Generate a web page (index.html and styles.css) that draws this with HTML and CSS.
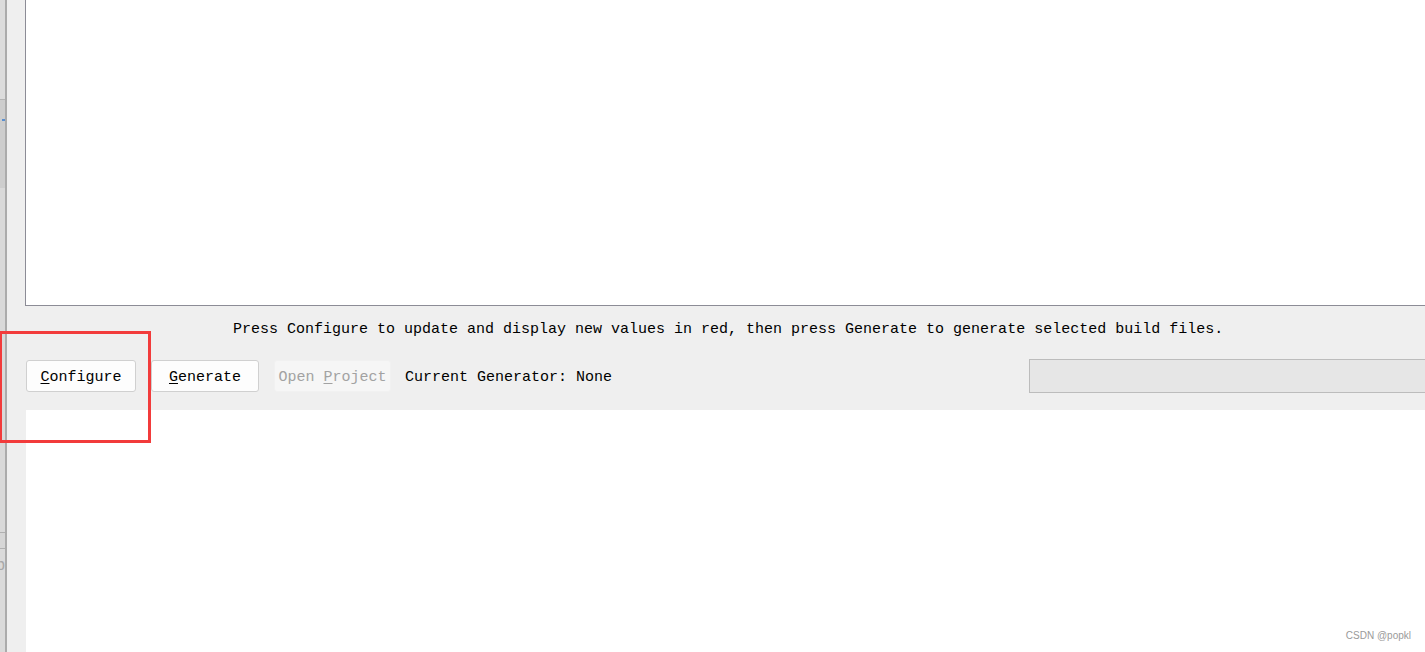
FILE: index.html
```html
<!DOCTYPE html>
<html>
<head>
<meta charset="utf-8">
<link rel="stylesheet" href="styles.css">
</head>
<body>
<div class="app">
  <div class="side">
    <div class="side-fill">
      <div class="seg seg-a"></div>
      <div class="seg seg-b"><span class="dot"></span></div>
      <div class="seg seg-c"></div>
      <div class="seg seg-d"></div>
      <div class="seg seg-e"><span class="glyph">b</span></div>
    </div>
    <div class="side-line"></div>
  </div>
  <div class="main">
    <div class="top-panel"></div>
    <div class="message">Press Configure to update and display new values in red, then press Generate to generate selected build files.</div>
    <div class="toolbar">
      <button class="btn btn-configure"><u>C</u>onfigure</button>
      <button class="btn btn-generate"><u>G</u>enerate</button>
      <button class="btn btn-disabled">Open <u>P</u>roject</button>
      <span class="generator">Current Generator: None</span>
      <div class="progress"></div>
    </div>
    <div class="bottom-panel"></div>
  </div>
</div>
<div class="highlight"></div>
<div class="watermark">CSDN @popkl</div>
</body>
</html>
```
FILE: styles.css
```css
html, body {
  margin: 0;
  padding: 0;
  height: 100%;
  overflow: hidden;
}
body {
  background: #efefef;
  font-family: "Liberation Mono", "DejaVu Sans Mono", monospace;
  font-size: 15px;
  color: #000;
  position: relative;
}
.app {
  display: flex;
  height: 652px;
}
.side {
  width: 7px;
  display: flex;
  flex-shrink: 0;
}
.side-fill {
  width: 5px;
  display: flex;
  flex-direction: column;
  background: #dadada;
}
.side-line {
  width: 2px;
  background: #ababab;
}
.seg { position: relative; overflow: hidden; }
.seg-a { height: 99px; background: #dcdcdc; border-bottom: 1px solid #b4b4b4; }
.seg-b { height: 88px; background: #cdcdcd; }
.seg-c { height: 344px; background: #d9d9d9; border-bottom: 1px solid #b0b0b0; }
.seg-d { height: 15px; background: #d6d6d6; border-bottom: 1px solid #b0b0b0; }
.seg-e { flex: 1; background: #dadada; }
.dot {
  position: absolute;
  left: 2px;
  top: 19px;
  width: 3px;
  height: 2px;
  background: #5a8fd0;
}
.glyph {
  position: absolute;
  left: -4px;
  top: 6px;
  font-family: "Liberation Sans", sans-serif;
  font-size: 16px;
  color: #a8a8a8;
  line-height: 20px;
}
.main {
  flex: 1;
  display: flex;
  flex-direction: column;
  padding-left: 18px;
  min-width: 0;
}
.top-panel {
  height: 305px;
  background: #fff;
  border-left: 1px solid #8c8c96;
  border-bottom: 1px solid #8c8c96;
  margin-right: -10px;
  flex-shrink: 0;
}
.message {
  margin-top: 14px;
  height: 20px;
  line-height: 20px;
  padding-left: 208px;
  white-space: nowrap;
}
.toolbar {
  margin-top: 19px;
  height: 34px;
  display: flex;
  align-items: center;
  padding-left: 1px;
  margin-right: -10px;
}
.btn {
  height: 32px;
  box-sizing: border-box;
  border: 1px solid #d0d0d0;
  border-radius: 3px;
  background: #fdfdfd;
  font-family: inherit;
  font-size: 15px;
  color: #000;
  padding: 3px 0 0;
  margin: 0;
  line-height: 26px;
}
.btn u { text-underline-offset: 2px; }
.btn-configure { width: 110px; }
.btn-generate { width: 108px; margin-left: 15px; }
.btn-disabled {
  width: 117px;
  margin-left: 15px;
  background: #f6f6f6;
  border-color: #f1f1f1;
  color: #a2a2a2;
  white-space: nowrap;
  overflow: hidden;
}
.generator {
  margin-left: 14px;
  padding-top: 2px;
  white-space: nowrap;
}
.progress {
  margin-left: 417px;
  flex: 1;
  height: 34px;
  box-sizing: border-box;
  border: 1px solid #bcbcbc;
  background: #e6e6e6;
}
.bottom-panel {
  margin-top: 17px;
  margin-left: 1px;
  margin-right: -10px;
  flex: 1;
  background: #fff;
}
.highlight {
  position: absolute;
  left: -1px;
  top: 331px;
  width: 146px;
  height: 106px;
  border: 3px solid #f23b3b;
}
.watermark {
  position: absolute;
  right: 14px;
  top: 630px;
  font-family: "Liberation Sans", sans-serif;
  font-size: 10px;
  color: #9a9a9a;
}
```
